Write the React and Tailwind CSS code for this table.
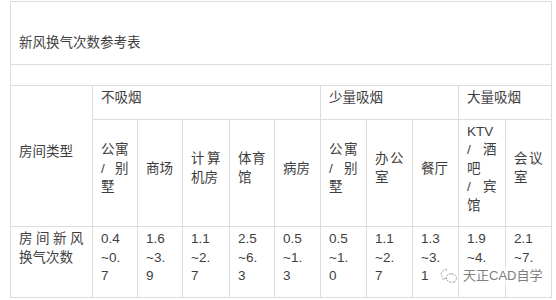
const colWidths = [82, 45, 45, 47, 45, 46, 46, 46, 46, 47, 46];

const groups = [
  { label: '不吸烟', span: 5 },
  { label: '少量吸烟', span: 3 },
  { label: '大量吸烟', span: 2 },
];

// names are given line by line, the way the cells wrap in the picture
// the last two rates are cut off by the watermark, so only their visible part is kept
const rooms = [
  { name: ['公寓', '/别', '墅'], rate: '0.4~0.7' },
  { name: ['商场'], rate: '1.6~3.9' },
  { name: ['计算', '机房'], rate: '1.1~2.7' },
  { name: ['体育', '馆'], rate: '2.5~6.3' },
  { name: ['病房'], rate: '0.5~1.3' },
  { name: ['公寓', '/别', '墅'], rate: '0.5~1.0' },
  { name: ['办公', '室'], rate: '1.1~2.7' },
  { name: ['餐厅'], rate: '1.3~3.1' },
  { name: ['KTV', '/酒', '吧', '/宾', '馆'], rate: '1.9~4.' },
  { name: ['会议', '室'], rate: '2.1~7.' },
];

const cell = 'border border-[#dcdcdc] pl-[8px] pr-[8.5px] pt-[3px] pb-[11px] align-middle';

function Lines({ lines }) {
  return lines.map((l, i) => (
    <div key={i} className={i < lines.length - 1 ? 'text-justify [text-align-last:justify]' : ''}>
      {l}
    </div>
  ));
}

function rateLines(rate) {
  const [lo, hi] = rate.split('~');
  const lines = [lo, '~' + hi.slice(0, 2)];
  if (hi.length > 2) lines.push(hi.slice(2));
  return lines;
}

function WechatMark() {
  return (
    <svg width="18" height="16" viewBox="0 0 18 16" fill="none" stroke="#9a9a9a" strokeWidth="1" strokeDasharray="2 1.2">
      <path d="M7 1.5C3.7 1.5 1.2 3.6 1.2 6.2c0 1.5.8 2.8 2.1 3.7l-.5 1.7 2-1c.7.2 1.4.3 2.2.3" />
      <path d="M11.5 5.8c-3 0-5.3 1.9-5.3 4.2s2.3 4.2 5.3 4.2c.6 0 1.2-.1 1.7-.2l1.7.9-.4-1.4c1.2-.8 2-2 2-3.4 0-2.4-2.3-4.3-5-4.3z" />
    </svg>
  );
}

export default function App() {
  return (
    <div
      className="relative w-[556px] h-[300px] bg-white overflow-hidden text-[#3e3e3e] text-[13.5px] leading-[18.5px]"
      style={{ fontFamily: '"Liberation Sans", "Noto Sans CJK SC", sans-serif' }}
    >
      <table className="table-fixed border-collapse ml-[10px] mt-[1px] w-[541px]">
        <colgroup>
          {colWidths.map((w, i) => (
            <col key={i} style={{ width: w }} />
          ))}
        </colgroup>
        <tbody>
          <tr>
            <td colSpan={11} className="border border-[#dcdcdc] h-[63px] pl-[8px] pt-[32px] pb-[11px] align-top">
              新风换气次数参考表
            </td>
          </tr>
          <tr>
            <td colSpan={11} className="border border-[#dcdcdc] h-[21px] p-0"></td>
          </tr>
          <tr>
            <td rowSpan={2} className={cell}>
              房间类型
            </td>
            {groups.map((g) => (
              <td key={g.label} colSpan={g.span} className={cell}>
                {g.label}
              </td>
            ))}
          </tr>
          <tr>
            {rooms.map((r, i) => (
              <td key={i} className={cell}>
                <Lines lines={r.name} />
              </td>
            ))}
          </tr>
          <tr>
            <td className={`${cell} align-top`}>
              <Lines lines={['房间新风', '换气次数']} />
            </td>
            {rooms.map((r, i) => (
              <td key={i} className={`${cell} align-top`}>
                {rateLines(r.rate).map((l, j) => (
                  <div key={j}>{l}</div>
                ))}
              </td>
            ))}
          </tr>
        </tbody>
      </table>

      <div className="absolute left-[440px] top-[267px] flex items-center gap-[5px] text-[13px] text-[#808080] [text-shadow:0_0_3px_#fff,0_0_3px_#fff,0_0_4px_#fff]">
        <span className="bg-white/80 rounded-full">
          <WechatMark />
        </span>
        <span className="bg-white/70 leading-[18px]">天正CAD自学</span>
      </div>
    </div>
  );
}
